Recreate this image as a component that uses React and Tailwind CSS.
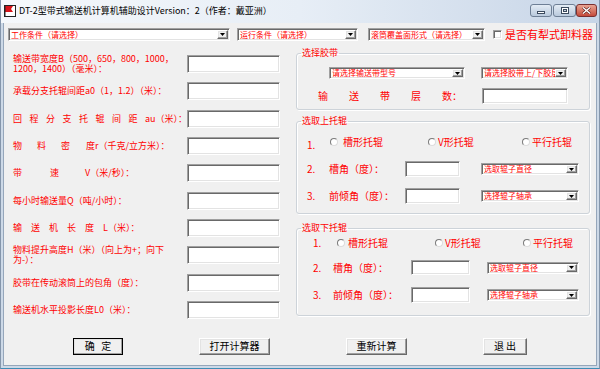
import React from "react";

// classic win32 bevels
const sunken =
  "bg-white border border-t-[#a0a0a0] border-l-[#a0a0a0] border-r-white border-b-white shadow-[inset_1px_1px_0_#696969,inset_-1px_-1px_0_#e3e3e3]";
const raised =
  "bg-[#f0f0f0] border border-t-white border-l-white border-r-[#696969] border-b-[#696969] shadow-[inset_-1px_-1px_0_#a0a0a0,inset_1px_1px_0_#e3e3e3]";

const Field = ({ className }) => <div className={`${sunken} shrink-0 ${className}`} />;

const DropArrow = () => (
  <div className={`${raised} w-[11px] shrink-0 flex items-center justify-center`}>
    <svg width="5" height="3" viewBox="0 0 5 3">
      <path d="M0 0h5L2.5 3z" fill="#000" />
    </svg>
  </div>
);

const Combo = ({ text, className }) => (
  <div className={`${sunken} shrink-0 flex p-px ${className}`}>
    <span className="flex-1 min-w-0 flex items-center overflow-x-clip whitespace-nowrap pl-px text-[8px] leading-[8px] text-[#ff0000]">
      {text}
    </span>
    <DropArrow />
  </div>
);

const Radio = ({ className = "" }) => (
  <span
    className={`w-[8px] h-[8px] shrink-0 rounded-full bg-white border border-t-[#7a7a7a] border-l-[#7a7a7a] border-r-[#dcdcdc] border-b-[#dcdcdc] ${className}`}
  />
);

const Spread = ({ cells, rest }) => (
  <span className="flex whitespace-nowrap">
    {cells.map(([c, w], i) => (
      <span key={i} className={w}>
        {c}
      </span>
    ))}
    <span>{rest}</span>
  </span>
);

const LeftRow = ({ children }) => (
  <div className="flex items-center h-[18px]">
    <div className="w-[174px] shrink-0 text-[9px] leading-[10px] text-[#ff0000] whitespace-nowrap">{children}</div>
    <Field className="w-[93px] h-[18px]" />
  </div>
);

const Group = ({ title, className, children }) => (
  <fieldset
    className={`border border-[#cdd3d9] rounded-[3px] shadow-[inset_1px_1px_0_#fff,1px_1px_0_#fff] ${className}`}
  >
    <legend className="ml-[4px] px-px text-[9px] leading-[10px] text-[#ff0000]">{title}</legend>
    {children}
  </fieldset>
);

const Option = ({ label, className, gap }) => (
  <div className={`flex items-center shrink-0 ${className}`}>
    <Radio className={gap[0]} />
    <span className={`text-[10px] leading-none text-[#ff0000] whitespace-nowrap ${gap[1]}`}>{label}</span>
  </div>
);

const Btn = ({ children, className }) => (
  <button
    className={`${raised} h-[17px] flex items-center justify-center text-[10px] leading-none text-black whitespace-pre ${className}`}
  >
    {children}
  </button>
);

const TitleBar = () => (
  <div className="h-[23px] shrink-0 flex items-start bg-linear-to-r from-[#f5f8fb] via-[#e7eef6] to-[#c7d5e7]">
    <svg width="14" height="14" viewBox="0 0 14 14" className="ml-[2px] mt-[4px] shrink-0">
      <rect x="1.5" y="1.5" width="11" height="11" fill="#fff" stroke="#222" />
      <path d="M2 2h8L8 5l2 3H2z" fill="#d8141a" />
      <path d="M2 2v10" stroke="#222" />
    </svg>
    <span className="ml-[2px] mt-[5px] text-[9px] leading-[11px] text-black whitespace-nowrap">
      DT-2型带式输送机计算机辅助设计Version：2（作者：戴亚洲）
    </span>
    <div className="ml-auto mr-[2px] mt-[4px] flex">
      <div className="w-[22px] h-[13px] rounded-[3px] border border-[#6e7f95] bg-linear-to-b from-[#e4ecf5] to-[#b9c9dc] flex items-end justify-center pb-[2px]">
        <span className="w-[8px] h-[3px] bg-white border border-[#3b4a5e]" />
      </div>
      <div className="ml-px w-[23px] h-[13px] rounded-[3px] border border-[#6e7f95] bg-linear-to-b from-[#e4ecf5] to-[#b9c9dc] flex items-center justify-center">
        <span className="w-[8px] h-[7px] border border-[#3b4a5e] bg-white flex items-center justify-center">
          <span className="w-[4px] h-[3px] border border-[#3b4a5e] bg-[#c7d3e2]" />
        </span>
      </div>
      <div className="w-[21px] h-[13px] rounded-[3px] border border-[#7a3030] bg-linear-to-b from-[#e8a493] to-[#c4493a] flex items-center justify-center">
        <svg width="9" height="7" viewBox="0 0 9 7">
          <path d="M1 0.5l7 6M8 0.5l-7 6" stroke="#5a1d18" strokeWidth="2.6" />
          <path d="M1 0.5l7 6M8 0.5l-7 6" stroke="#fff" strokeWidth="1.4" />
        </svg>
      </div>
    </div>
  </div>
);

const LeftColumn = () => (
  <div className="w-[286px] shrink-0 pt-[14px] pl-[9px] flex flex-col gap-[9.33px]">
    <LeftRow>
      输送带宽度B（500，650，800，1000，
      <br />
      1200，1400）（毫米）：
    </LeftRow>
    <LeftRow>承载分支托辊间距a0（1，1.2）（米）：</LeftRow>
    <LeftRow>
      <Spread
        cells={["回", "程", "分", "支", "托", "辊", "间", "距"].map((c) => [c, "w-[18px]"])}
        rest="au（米）："
      />
    </LeftRow>
    <LeftRow>
      <Spread
        cells={[
          ["物", "w-[24px]"],
          ["料", "w-[24px]"],
          ["密", "w-[25px]"],
        ]}
        rest="度r（千克/立方米）："
      />
    </LeftRow>
    <LeftRow>
      <Spread
        cells={[
          ["带", "w-[37px]"],
          ["速", "w-[35px]"],
        ]}
        rest="V（米/秒）："
      />
    </LeftRow>
    <LeftRow>每小时输送量Q（吨/小时）：</LeftRow>
    <LeftRow>
      <Spread cells={["输", "送", "机", "长", "度"].map((c) => [c, "w-[18px]"])} rest="L（米）：" />
    </LeftRow>
    <LeftRow>
      物料提升高度H（米）（向上为+；向下
      <br />
      为-）：
    </LeftRow>
    <LeftRow>胶带在传动滚筒上的包角（度）：</LeftRow>
    <LeftRow>输送机水平投影长度L0（米）：</LeftRow>
  </div>
);

const RightColumn = () => (
  <div className="ml-[6px] w-[294px] shrink-0 pt-[7px] flex flex-col">
    <Group title="选择胶带" className="pb-[5px]">
      <div className="flex mt-[9px] pl-[32px]">
        <Combo text="请选择输送带型号" className="w-[136px] h-[12px]" />
        <Combo text="请选择胶带上/下胶层" className="ml-[16px] w-[87px] h-[12px]" />
      </div>
      <div className="flex items-center mt-[9px] pl-[21px]">
        <div className="w-[164px] shrink-0 text-[10px] leading-none text-[#ff0000]">
          <Spread cells={["输", "送", "带", "层"].map((c) => [c, "w-[31px]"])} rest="数：" />
        </div>
        <Field className="w-[86px] h-[16px]" />
      </div>
    </Group>

    <Group title="选取上托辊" className="mt-[6px] pb-[9px]">
      <div className="flex items-center h-[16px] mt-[8px] pl-[10px]">
        <span className="w-[22px] shrink-0 mt-[6px] text-[10px] leading-none text-[#ff0000]">1.</span>
        <Option label="槽形托辊" className="w-[99px]" gap={["ml-px", "ml-[5px]"]} />
        <Option label="V形托辊" className="w-[94px]" gap={["", "ml-[2px]"]} />
        <Option label="平行托辊" gap={["", "ml-[2px]"]} />
      </div>
      {["槽角（度）：", "前倾角（度）："].map((t, i) => (
        <div key={t} className="flex items-center h-[16px] mt-[11px] pl-[10px]">
          <span className="w-[22px] shrink-0 text-[10px] leading-none text-[#ff0000]">{i + 2}.</span>
          <span className="w-[76px] shrink-0 text-[10px] leading-none text-[#ff0000] whitespace-nowrap">{t}</span>
          <Field className="w-[55px] h-[16px]" />
          <Combo text={i === 0 ? "选取辊子直径" : "选择辊子轴承"} className="ml-[21px] w-[98px] h-[12px]" />
        </div>
      ))}
    </Group>

    <Group title="选取下托辊" className="mt-[9px] pb-[12px]">
      <div className="flex items-center h-[16px] mt-[2px] pl-[16px]">
        <span className="w-[20px] shrink-0 text-[10px] leading-none text-[#ff0000]">1.</span>
        <Option label="槽形托辊" className="w-[102px]" gap={["ml-[4px]", "ml-[3px]"]} />
        <Option label="V形托辊" className="w-[88px]" gap={["", "ml-[2px]"]} />
        <Option label="平行托辊" gap={["", "ml-[2px]"]} />
      </div>
      <div className="flex items-center h-[15px] mt-[9px] pl-[16px]">
        <span className="w-[20px] shrink-0 text-[10px] leading-none text-[#ff0000]">2.</span>
        <span className="w-[78px] shrink-0 text-[10px] leading-none text-[#ff0000]">槽角（度）：</span>
        <Field className="w-[59px] h-[15px]" />
        <Combo text="选取辊子直径" className="ml-[17px] w-[92px] h-[12px]" />
      </div>
      <div className="flex items-center h-[16px] mt-[12px] pl-[16px]">
        <span className="w-[20px] shrink-0 text-[10px] leading-none text-[#ff0000]">3.</span>
        <span className="w-[78px] shrink-0 text-[10px] leading-none text-[#ff0000] whitespace-nowrap">前倾角（度）：</span>
        <Field className="w-[59px] h-[16px]" />
        <Combo text="选择辊子轴承" className="ml-[17px] w-[92px] h-[12px]" />
      </div>
    </Group>
  </div>
);

export default function App() {
  return (
    <div className="w-[600px] h-[369px] overflow-hidden flex flex-col bg-[#cdd9e7] border-x border-b border-x-[#8596ab] border-b-[#3f8db5] font-['Noto_Sans_CJK_SC',sans-serif]">
      <TitleBar />
      <div className="flex-1 mx-[2px] mb-[2px] flex flex-col bg-[#f0f0f0] border-x border-b border-[#95a6ba]">
        <div className="flex items-center pt-[5px] pl-[4px]">
          <Combo text="工作条件（请选择）" className="w-[222px] h-[13px]" />
          <Combo text="运行条件（请选择）" className="ml-[7px] w-[121px] h-[13px]" />
          <Combo text="滚筒覆盖面形式（请选择）" className="ml-[10px] w-[117px] h-[13px]" />
          <Field className="ml-[8px] w-[9px] h-[9px]" />
          <span className="ml-[3px] text-[11px] leading-none text-[#ff0000] whitespace-nowrap">是否有犁式卸料器</span>
        </div>

        <div className="flex items-start">
          <LeftColumn />
          <RightColumn />
        </div>

        <div className="flex mt-[19px] pl-[69px] gap-[76px]">
          <Btn className="w-[50px] outline outline-1 outline-black -outline-offset-1">{"确   定"}</Btn>
          <Btn className="w-[71px]">打开计算器</Btn>
          <Btn className="w-[61px]">重新计算</Btn>
          <Btn className="w-[44px]">{"退 出"}</Btn>
        </div>
      </div>
    </div>
  );
}
